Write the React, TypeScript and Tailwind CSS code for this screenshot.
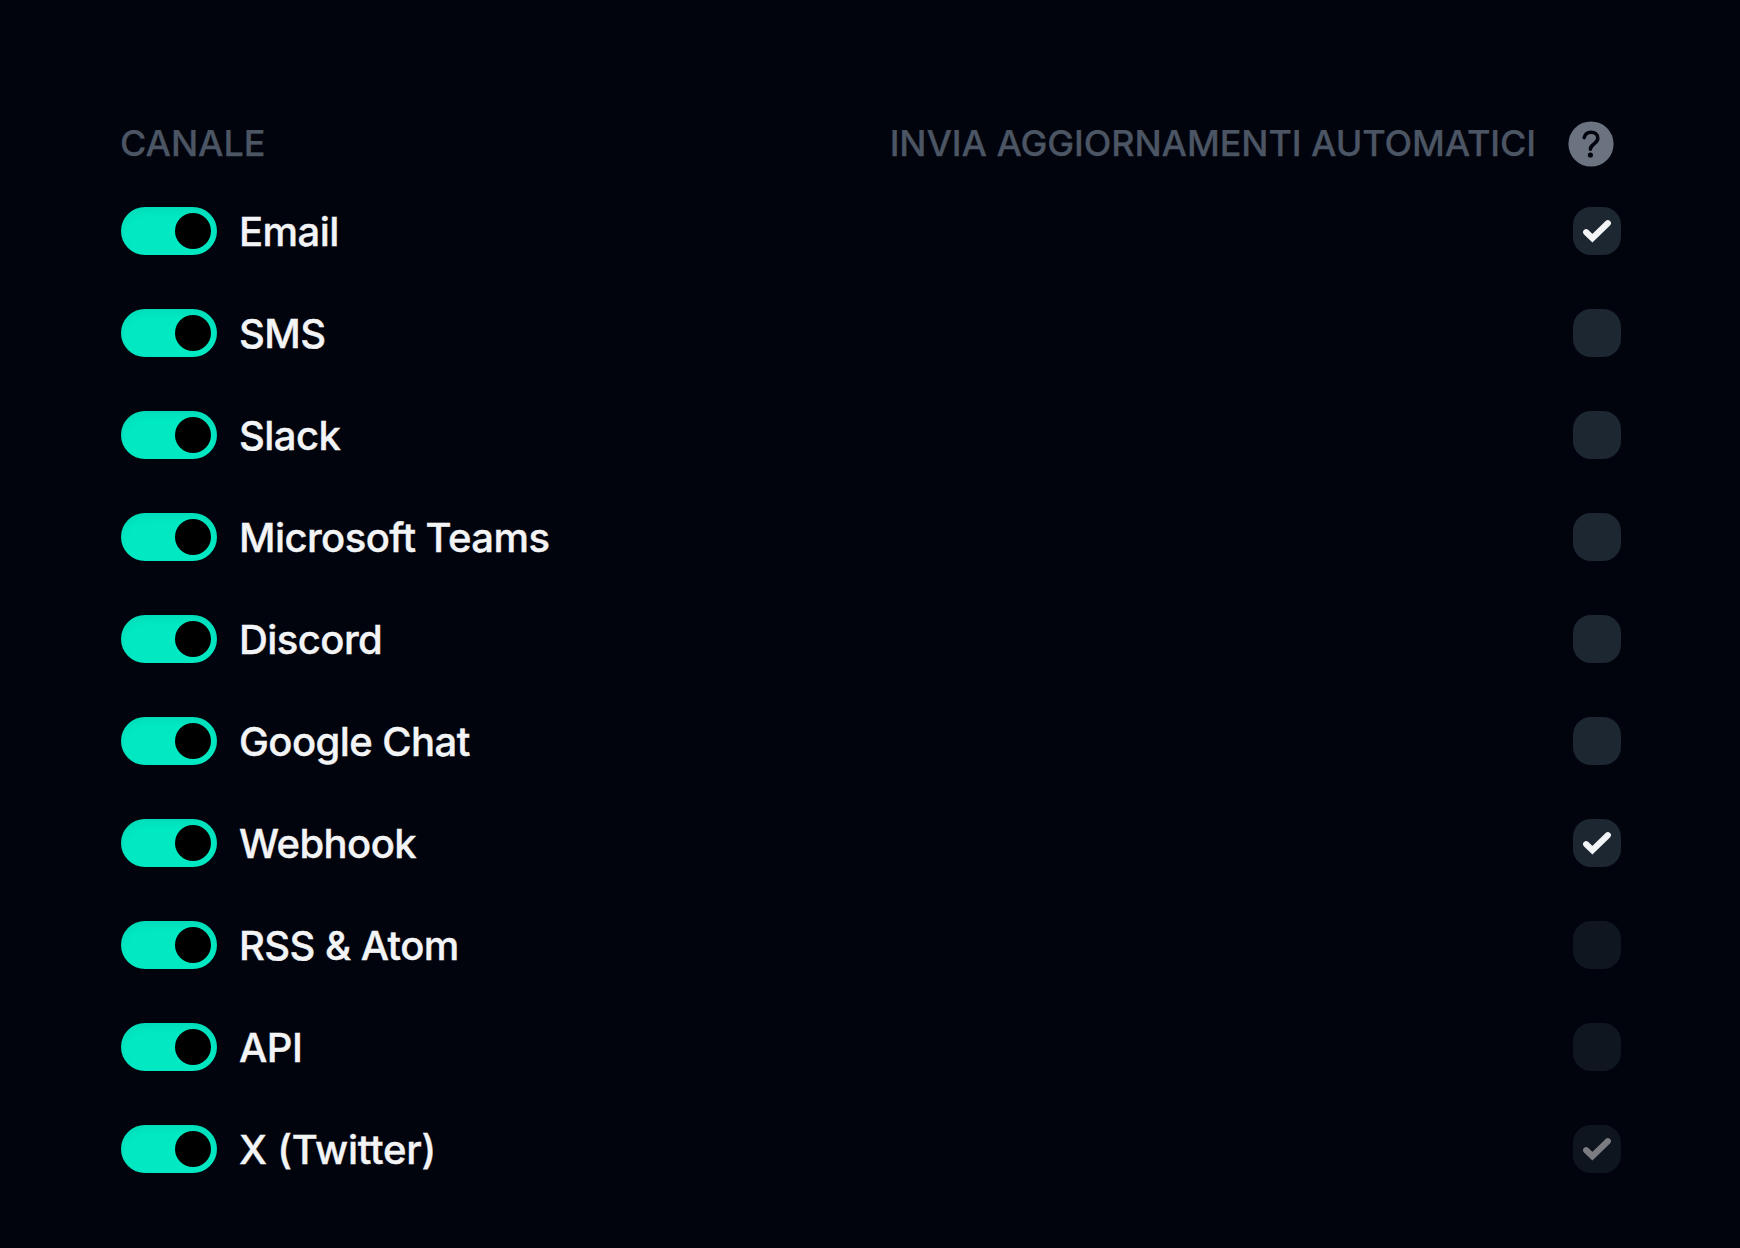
import React, { useState } from 'react';

interface Channel {
  id: string;
  label: string;
  autoSend: boolean;
  locked?: boolean;
  tracking?: string;
}

const channels: Channel[] = [
  { id: 'email', label: 'Email', autoSend: true },
  { id: 'sms', label: 'SMS', autoSend: false },
  { id: 'slack', label: 'Slack', autoSend: false },
  { id: 'teams', label: 'Microsoft Teams', autoSend: false },
  { id: 'discord', label: 'Discord', autoSend: false },
  { id: 'google-chat', label: 'Google Chat', autoSend: false },
  { id: 'webhook', label: 'Webhook', autoSend: true },
  { id: 'rss', label: 'RSS & Atom', autoSend: false, locked: true },
  { id: 'api', label: 'API', autoSend: false, locked: true },
  // the double t kerns too tightly with the default tracking
  {
    id: 'twitter',
    label: 'X (Twitter)',
    autoSend: true,
    locked: true,
    tracking: 'tracking-[-0.25px]',
  },
];

const HelpIcon = () => (
  <svg viewBox="0 0 46 46" className="h-[46px] w-[46px]" fill="none">
    <circle cx="23" cy="23" r="22.6" fill="#6b7280" />
    <path
      d="M16.2 16.6C17 13 19.8 11.2 23 11.2C27 11.2 29.8 13.6 29.8 17C29.8 19.6 28.6 21 26.2 22.7C23.8 24.4 22.4 25.6 22.4 28.2"
      stroke="#02040d"
      strokeWidth="3.5"
      strokeLinecap="round"
      strokeLinejoin="round"
    />
    <circle cx="22.4" cy="34" r="2.6" fill="#02040d" />
  </svg>
);

interface ToggleProps {
  on: boolean;
  onChange: () => void;
}

const Toggle: React.FC<ToggleProps> = ({ on, onChange }) => (
  <button
    role="switch"
    aria-checked={on}
    onClick={onChange}
    className={`flex h-12 w-24 items-center rounded-full px-1.5 shadow-[inset_0_4px_8px_rgba(0,0,0,0.06)] ${
      on ? 'justify-end bg-[#00e9c3]' : 'justify-start bg-[#1c2732]'
    }`}
  >
    <span className="h-9 w-9 rounded-full bg-black" />
  </button>
);

interface CheckboxProps {
  checked: boolean;
  disabled?: boolean;
  onChange: () => void;
}

const Checkbox: React.FC<CheckboxProps> = ({ checked, disabled, onChange }) => (
  <button
    role="checkbox"
    aria-checked={checked}
    disabled={disabled}
    onClick={onChange}
    className={`h-12 w-12 rounded-[18px] bg-[#1c2732] text-gray-100 ${
      disabled ? 'opacity-50' : ''
    }`}
  >
    {checked && (
      <svg viewBox="0 0 48 48" className="h-12 w-12" fill="none">
        <path
          d="M13.2 25.2L19.4 31.2L34.8 16.2"
          stroke="currentColor"
          strokeWidth="6.2"
          strokeLinecap="round"
          strokeLinejoin="miter"
        />
      </svg>
    )}
  </button>
);

export default function App() {
  const [enabled, setEnabled] = useState<Record<string, boolean>>(
    Object.fromEntries(channels.map((c) => [c.id, true]))
  );
  const [auto, setAuto] = useState<Record<string, boolean>>(
    Object.fromEntries(channels.map((c) => [c.id, c.autoSend]))
  );

  return (
    <div className="h-[1248px] w-[1740px] bg-[#02040d] pt-[119px] pr-[119px] pl-[121px] font-['Inter',sans-serif] font-medium">
      <div className="-ml-px flex h-12 items-center justify-between pr-[7px] text-[36px] leading-[48px] tracking-[-0.12px] text-[#4b5563] [-webkit-text-stroke:0.25px]">
        <span>CANALE</span>
        <div className="flex items-center gap-8">
          <span>INVIA AGGIORNAMENTI AUTOMATICI</span>
          <div className="pt-0.5">
            <HelpIcon />
          </div>
        </div>
      </div>

      <div className="mt-10 flex flex-col gap-[54px]">
        {channels.map((c) => (
          <div key={c.id} className="flex h-12 items-center justify-between">
            <div className="flex items-center gap-[22px]">
              <Toggle
                on={enabled[c.id]}
                onChange={() => setEnabled({ ...enabled, [c.id]: !enabled[c.id] })}
              />
              <span
                className={`pt-0.5 text-[40px] leading-[48px] text-gray-100 [-webkit-text-stroke:0.4px] ${
                  c.tracking ?? 'tracking-[-0.57px]'
                }`}
              >
                {c.label}
              </span>
            </div>
            <Checkbox
              checked={auto[c.id]}
              disabled={c.locked}
              onChange={() => setAuto({ ...auto, [c.id]: !auto[c.id] })}
            />
          </div>
        ))}
      </div>
    </div>
  );
}
